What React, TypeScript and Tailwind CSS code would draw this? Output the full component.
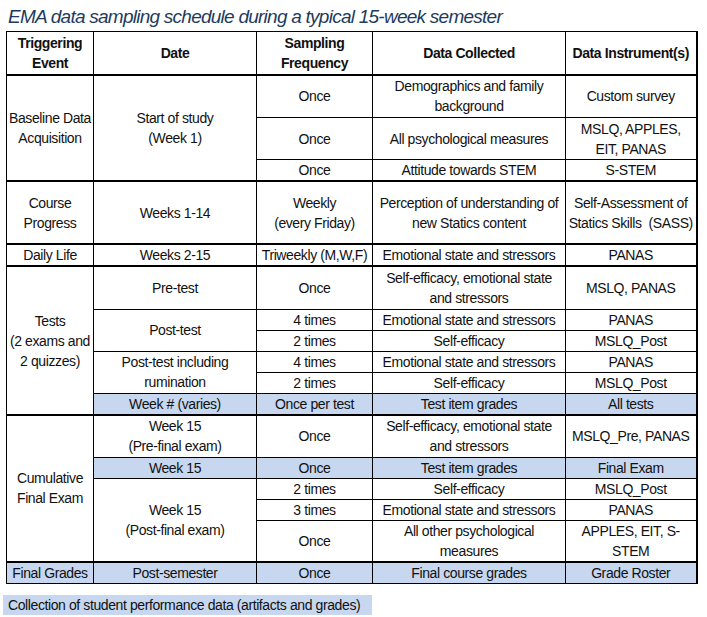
import React from 'react';
import clsx from 'clsx';

interface CellProps {
  children?: React.ReactNode;
  rowSpan?: number;
  shaded?: boolean;
  thick?: boolean;
  head?: boolean;
}

const Cell: React.FC<CellProps> = ({ children, rowSpan, shaded, thick, head }) => (
  <td
    rowSpan={rowSpan}
    className={clsx(
      'border border-black p-0 text-center align-middle leading-[20px] whitespace-nowrap',
      shaded && 'bg-[#c6d7ef]',
      thick && 'border-b-2',
      head && 'font-bold'
    )}
  >
    {children}
  </td>
);

const App: React.FC = () => {
  return (
    <div
      className="w-[707px] h-[617px] bg-white pt-[5px] pl-[6px] text-[#111] text-[14px] tracking-[-0.4px]"
      style={{ fontFamily: '"Liberation Sans", Arial, sans-serif' }}
    >
      <h1 className="pl-[2px] h-[24px] mb-[2px] text-[19px] leading-[24px] italic tracking-[-0.75px] text-[#1e3a5c]">
        EMA data sampling schedule during a typical 15-week semester
      </h1>

      <table className="w-[690px] table-fixed border-collapse border-r-2 border-black">
        <colgroup>
          <col className="w-[87px]" />
          <col className="w-[163px]" />
          <col className="w-[116px]" />
          <col className="w-[193px]" />
          <col className="w-[131px]" />
        </colgroup>
        <tbody>
          <tr className="h-[43px]">
            <Cell head thick>Triggering<br />Event</Cell>
            <Cell head thick>Date</Cell>
            <Cell head thick>Sampling<br />Frequency</Cell>
            <Cell head thick>Data Collected</Cell>
            <Cell head thick>Data Instrument(s)</Cell>
          </tr>

          {/* Baseline */}
          <tr className="h-[43px]">
            <Cell rowSpan={3} thick>Baseline Data<br />Acquisition</Cell>
            <Cell rowSpan={3} thick>Start of study<br />(Week 1)</Cell>
            <Cell>Once</Cell>
            <Cell>Demographics and family<br />background</Cell>
            <Cell>Custom survey</Cell>
          </tr>
          <tr className="h-[42px]">
            <Cell>Once</Cell>
            <Cell>All psychological measures</Cell>
            <Cell>MSLQ, APPLES,<br />EIT, PANAS</Cell>
          </tr>
          <tr className="h-[21px]">
            <Cell thick>Once</Cell>
            <Cell thick>Attitude towards STEM</Cell>
            <Cell thick>S-STEM</Cell>
          </tr>

          {/* Course progress */}
          <tr className="h-[63px]">
            <Cell thick>Course<br />Progress</Cell>
            <Cell thick>Weeks 1-14</Cell>
            <Cell thick>Weekly<br />(every Friday)</Cell>
            <Cell thick>Perception of understanding of<br />new Statics content</Cell>
            <Cell thick>Self-Assessment of<br />Statics Skills&nbsp; (SASS)</Cell>
          </tr>

          {/* Daily life */}
          <tr className="h-[21px]">
            <Cell thick>Daily Life</Cell>
            <Cell thick>Weeks 2-15</Cell>
            <Cell thick>Triweekly (M,W,F)</Cell>
            <Cell thick>Emotional state and stressors</Cell>
            <Cell thick>PANAS</Cell>
          </tr>

          {/* Tests */}
          <tr className="h-[43px]">
            <Cell rowSpan={6} thick>Tests<br />(2 exams and<br />2 quizzes)</Cell>
            <Cell>Pre-test</Cell>
            <Cell>Once</Cell>
            <Cell>Self-efficacy, emotional state<br />and stressors</Cell>
            <Cell>MSLQ, PANAS</Cell>
          </tr>
          <tr className="h-[20px]">
            <Cell rowSpan={2}>Post-test</Cell>
            <Cell>4 times</Cell>
            <Cell>Emotional state and stressors</Cell>
            <Cell>PANAS</Cell>
          </tr>
          <tr className="h-[21px]">
            <Cell>2 times</Cell>
            <Cell>Self-efficacy</Cell>
            <Cell>MSLQ_Post</Cell>
          </tr>
          <tr className="h-[21px]">
            <Cell rowSpan={2}>Post-test including<br />rumination</Cell>
            <Cell>4 times</Cell>
            <Cell>Emotional state and stressors</Cell>
            <Cell>PANAS</Cell>
          </tr>
          <tr className="h-[20px]">
            <Cell>2 times</Cell>
            <Cell>Self-efficacy</Cell>
            <Cell>MSLQ_Post</Cell>
          </tr>
          <tr className="h-[22px]">
            <Cell shaded thick>Week # (varies)</Cell>
            <Cell shaded thick>Once per test</Cell>
            <Cell shaded thick>Test item grades</Cell>
            <Cell shaded thick>All tests</Cell>
          </tr>

          {/* Cumulative final exam */}
          <tr className="h-[42px]">
            <Cell rowSpan={5} thick>Cumulative<br />Final Exam</Cell>
            <Cell>Week 15<br />(Pre-final exam)</Cell>
            <Cell>Once</Cell>
            <Cell>Self-efficacy, emotional state<br />and stressors</Cell>
            <Cell>MSLQ_Pre, PANAS</Cell>
          </tr>
          <tr className="h-[21px]">
            <Cell shaded>Week 15</Cell>
            <Cell shaded>Once</Cell>
            <Cell shaded>Test item grades</Cell>
            <Cell shaded>Final Exam</Cell>
          </tr>
          <tr className="h-[21px]">
            <Cell rowSpan={3} thick>Week 15<br />(Post-final exam)</Cell>
            <Cell>2 times</Cell>
            <Cell>Self-efficacy</Cell>
            <Cell>MSLQ_Post</Cell>
          </tr>
          <tr className="h-[20px]">
            <Cell>3 times</Cell>
            <Cell>Emotional state and stressors</Cell>
            <Cell>PANAS</Cell>
          </tr>
          <tr className="h-[40px]">
            <Cell thick>Once</Cell>
            <Cell thick>All other psychological<br />measures</Cell>
            <Cell thick>APPLES, EIT, S-<br />STEM</Cell>
          </tr>

          {/* Final grades */}
          <tr className="h-[20px]">
            <Cell shaded>Final Grades</Cell>
            <Cell shaded>Post-semester</Cell>
            <Cell shaded>Once</Cell>
            <Cell shaded>Final course grades</Cell>
            <Cell shaded>Grade Roster</Cell>
          </tr>
        </tbody>
      </table>

      <div className="mt-[11px] -ml-[3px] w-[369px] h-[20px] bg-[#c6d7ef] pl-[5px] leading-[20px] whitespace-nowrap">
        Collection of student performance data (artifacts and grades)
      </div>
    </div>
  );
};

export default App;
